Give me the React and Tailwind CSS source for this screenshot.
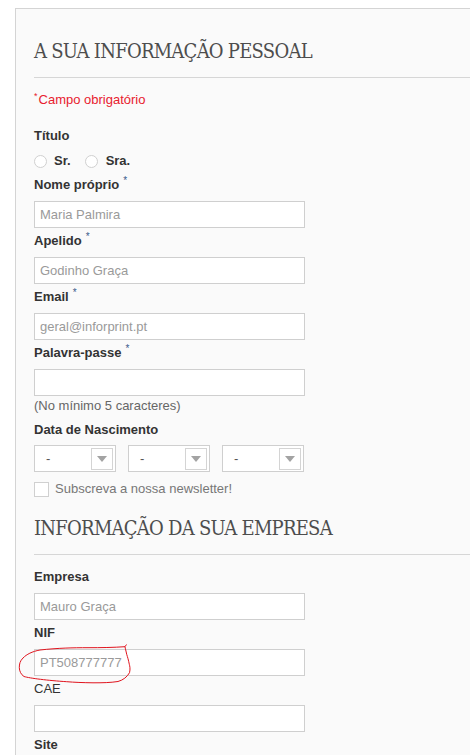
const Star = () => (
  <span className="relative -top-[5px] ml-[4px] text-[10px] font-normal text-[#3a5b8c]">*</span>
);

const Field = ({ label, required, value, bold = true, className = 'mt-[3px]', children }) => (
  <div className={`relative ${className}`}>
    <div className={`h-5 leading-5 text-[13px] text-[#333] ${bold ? 'font-bold' : 'font-normal'}`}>
      {label}
      {required && <Star />}
    </div>
    <div className="relative mt-[6px]">
      <input
        className="block h-[27px] w-[271px] border border-[#cfcfcf] bg-white px-[5px] text-[13px] text-[#333] outline-none placeholder:text-[#9a9a9a]"
        placeholder={value}
        type={label === 'Palavra-passe' ? 'password' : 'text'}
      />
      {children}
    </div>
  </div>
);

const DateSelect = () => (
  <div className="flex h-[27px] w-[82px] items-center justify-between border border-[#cfcfcf] bg-white pl-[11px] pr-[2px]">
    <span className="text-[13px] text-[#555]">-</span>
    <div className="flex h-[22px] w-[22px] items-center justify-center border border-[#d4d4d4] bg-white">
      <svg width="10" height="6" viewBox="0 0 10 6">
        <path d="M0 0 H10 L5 6 Z" fill="#a3a3a3" />
      </svg>
    </div>
  </div>
);

const Heading = ({ children, className = '' }) => (
  <h2
    className={`border-b border-[#d6d6d6] pb-[14px] text-[20px] leading-[24px] font-normal tracking-[-0.75px] text-[#4d4d4d] font-stretch-condensed ${className}`}
    style={{ fontFamily: '"DejaVu Serif Condensed", "DejaVu Serif", serif' }}
  >
    {children}
  </h2>
);

export default function App() {
  return (
    <div className="h-screen overflow-hidden bg-white pt-2 pl-[15px] font-['Liberation_Sans',Arial,sans-serif]">
      <div className="h-full border-l border-t border-[#d4d4d4] bg-[#fafafa] pt-[30px] pl-[18px]">
        <Heading>A SUA INFORMAÇÃO PESSOAL</Heading>

        <p className="mt-3 h-5 leading-5 text-[13px] text-[#e8202e]">
          <span className="relative -top-[5px] mr-[1px] text-[9px]">*</span>Campo obrigatório
        </p>

        <div className="mt-4 h-5 leading-5 text-[13px] font-bold text-[#333]">Título</div>
        <div className="mt-[5px] flex h-5 items-center text-[13px] font-bold text-[#333]">
          <span className="h-[13px] w-[13px] rounded-full border border-[#d0d0d0] bg-white" />
          <span className="ml-[7px]">Sr.</span>
          <span className="ml-[14px] h-[13px] w-[13px] rounded-full border border-[#d0d0d0] bg-white" />
          <span className="ml-[8px]">Sra.</span>
        </div>

        <Field label="Nome próprio" required value="Maria Palmira" className="mt-1" />
        <Field label="Apelido" required value="Godinho Graça" />
        <Field label="Email" required value="geral@inforprint.pt" />
        <Field label="Palavra-passe" required value="" />
        <div className="h-5 leading-5 text-[13px] text-[#666]">(No mínimo 5 caracteres)</div>

        <div className="mt-1 h-5 leading-5 text-[13px] font-bold text-[#333]">Data de Nascimento</div>
        <div className="mt-[5px] flex gap-3">
          <DateSelect />
          <DateSelect />
          <DateSelect />
        </div>
        <div className="mt-[7px] flex h-5 items-center">
          <span className="h-[15px] w-[15px] border border-[#d0d0d0] bg-white" />
          <span className="ml-[6px] text-[13px] text-[#777]">Subscreva a nossa newsletter!</span>
        </div>

        <Heading className="mt-[17px]">INFORMAÇÃO DA SUA EMPRESA</Heading>

        <Field label="Empresa" value="Mauro Graça" className="mt-3" />
        <Field label="NIF" value="PT508777777">
          <svg
            className="pointer-events-none absolute -left-[16px] -top-[6px]"
            width="116"
            height="44"
            viewBox="0 0 116 44"
            fill="none"
          >
            <path
              d="M107 3.7 C96 4.5 82 4.7 70 4.7 C55 4.7 40 5 22 7 C14 8.5 8.7 11.3 5 15 C2 18 1.3 21 1.3 24.7 C1.5 28 2.7 31.3 6 33.5 C12 35.3 30 37.5 48.7 38.7 C56 39.3 65.3 39.7 75 39.8 C85 39.8 92 39.7 100 38.5 C105.3 37 109 34 111.5 29.7 C112.5 26 111.8 23 111.3 21.3 C110.5 17 109.5 14 108.7 11.3 C108 8 107.3 5.5 107 3.7 L108.5 1.5"
              stroke="#e0141e"
              strokeWidth="1"
            />
          </svg>
        </Field>
        <Field label="CAE" value="" bold={false} />
        <div className="mt-[3px] h-5 leading-5 text-[13px] font-bold text-[#333]">Site</div>
      </div>
    </div>
  );
}
